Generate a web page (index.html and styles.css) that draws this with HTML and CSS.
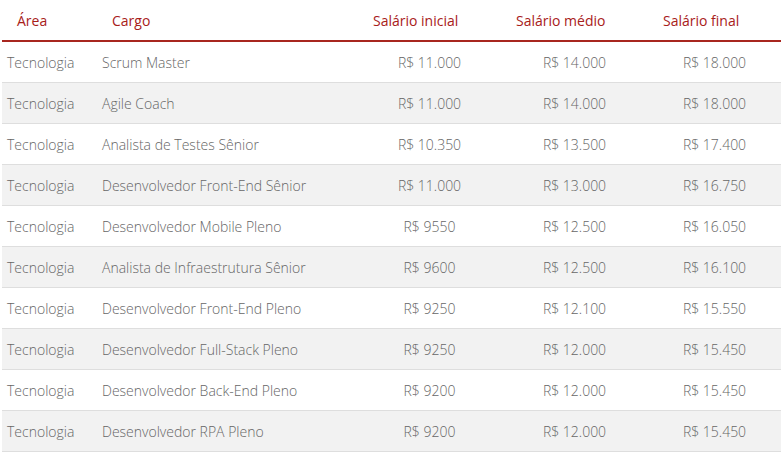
FILE: index.html
```html
<!DOCTYPE html>
<html lang="pt-BR">
<head>
<meta charset="utf-8">
<link rel="stylesheet" href="styles.css">
</head>
<body>
<table class="salarios">
  <colgroup>
    <col class="c-area"><col class="c-cargo"><col class="c-ini"><col class="c-med"><col class="c-fin">
  </colgroup>
  <thead>
    <tr><th>Área</th><th>Cargo</th><th>Salário inicial</th><th>Salário médio</th><th>Salário final</th></tr>
  </thead>
  <tbody>
    <tr><td>Tecnologia</td><td>Scrum Master</td><td class="num">R$ 11.000</td><td class="num">R$ 14.000</td><td class="num">R$ 18.000</td></tr>
    <tr><td>Tecnologia</td><td>Agile Coach</td><td class="num">R$ 11.000</td><td class="num">R$ 14.000</td><td class="num">R$ 18.000</td></tr>
    <tr><td>Tecnologia</td><td>Analista de Testes Sênior</td><td class="num">R$ 10.350</td><td class="num">R$ 13.500</td><td class="num">R$ 17.400</td></tr>
    <tr><td>Tecnologia</td><td>Desenvolvedor Front-End Sênior</td><td class="num">R$ 11.000</td><td class="num">R$ 13.000</td><td class="num">R$ 16.750</td></tr>
    <tr><td>Tecnologia</td><td>Desenvolvedor Mobile Pleno</td><td class="num">R$ 9550</td><td class="num">R$ 12.500</td><td class="num">R$ 16.050</td></tr>
    <tr><td>Tecnologia</td><td>Analista de Infraestrutura Sênior</td><td class="num">R$ 9600</td><td class="num">R$ 12.500</td><td class="num">R$ 16.100</td></tr>
    <tr><td>Tecnologia</td><td>Desenvolvedor Front-End Pleno</td><td class="num">R$ 9250</td><td class="num">R$ 12.100</td><td class="num">R$ 15.550</td></tr>
    <tr><td>Tecnologia</td><td>Desenvolvedor Full-Stack Pleno</td><td class="num">R$ 9250</td><td class="num">R$ 12.000</td><td class="num">R$ 15.450</td></tr>
    <tr><td>Tecnologia</td><td>Desenvolvedor Back-End Pleno</td><td class="num">R$ 9200</td><td class="num">R$ 12.000</td><td class="num">R$ 15.450</td></tr>
    <tr><td>Tecnologia</td><td>Desenvolvedor RPA Pleno</td><td class="num">R$ 9200</td><td class="num">R$ 12.000</td><td class="num">R$ 15.450</td></tr>
  </tbody>
</table>
</body>
</html>
```

FILE: styles.css
```css
html, body {
  margin: 0;
  padding: 0;
  background: #ffffff;
}
body {
  padding: 0 0 0 2px;
  font-family: "Open Sans", "Noto Sans", sans-serif;
  font-size: 14px;
  color: #6b6b6b;
}
.salarios {
  border-collapse: collapse;
  table-layout: fixed;
  width: 779px;
}
.c-area { width: 95px; }
.c-cargo { width: 261px; }
.c-ini { width: 143px; }
.c-med { width: 147px; }
.c-fin { width: 133px; }

.salarios th {
  height: 41px;
  padding: 0 0 0 15px;
  text-align: left;
  font-weight: 400;
  color: #a8201a;
  border-bottom: 2px solid #a8261f;
  vertical-align: middle;
  box-sizing: border-box;
}
.salarios td {
  height: 40px;
  padding: 0 0 0 5px;
  text-align: left;
  vertical-align: middle;
  border-bottom: 1px solid #dedede;
  white-space: nowrap;
  font-size: 14px;
  font-weight: 300;
  color: #666666;
}
.salarios td.num {
  text-align: center;
  padding: 0;
}
.salarios tbody tr:nth-child(even) td {
  background: #f2f2f2;
}
```
